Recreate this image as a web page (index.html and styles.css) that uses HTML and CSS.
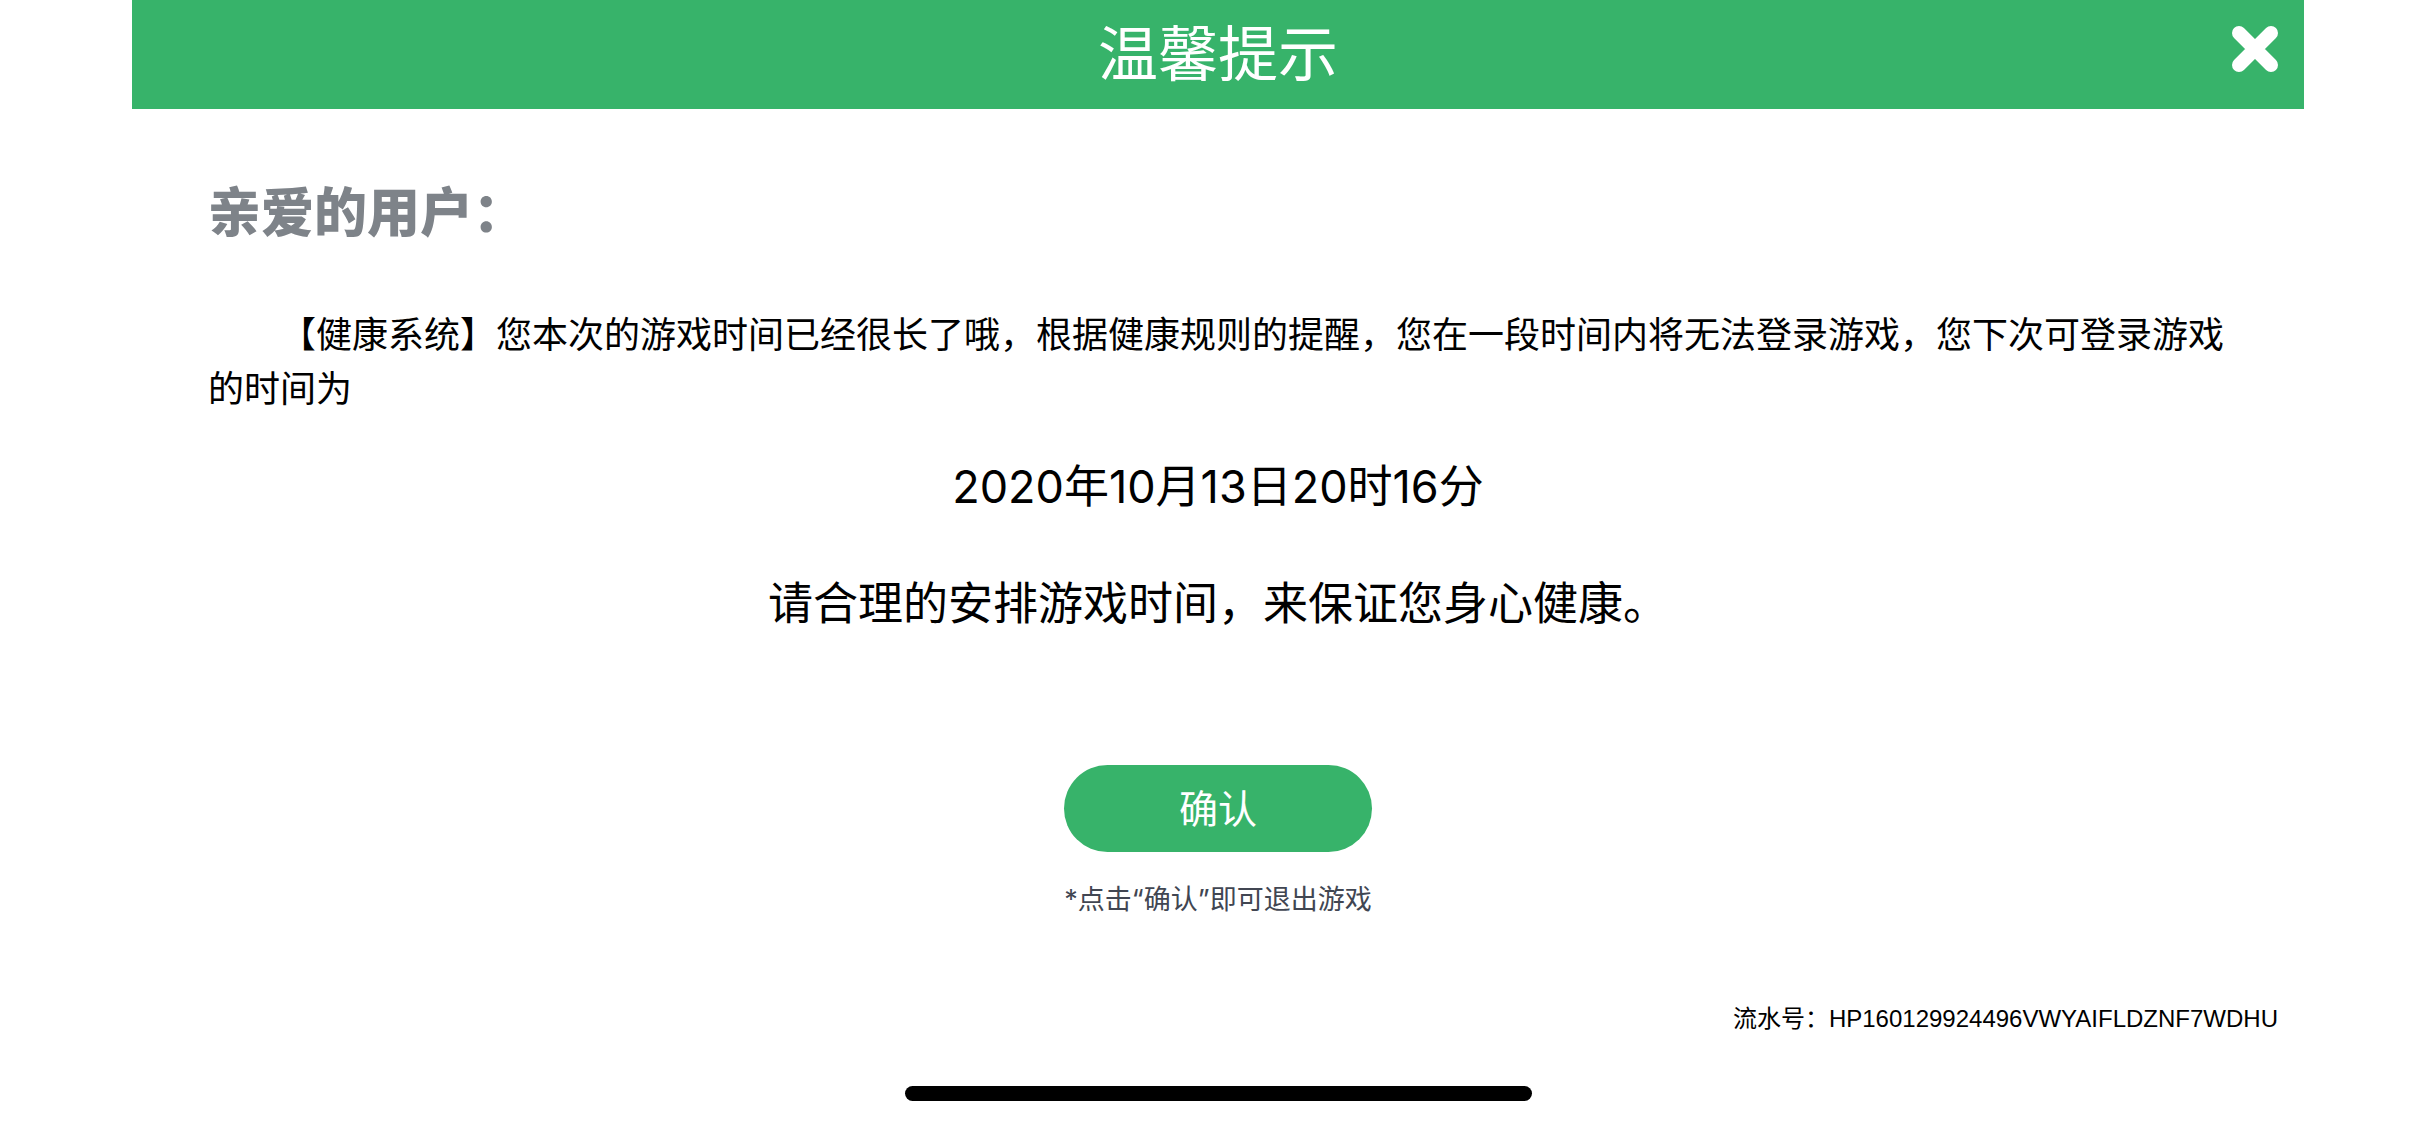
FILE: index.html
```html
<!DOCTYPE html>
<html lang="zh-CN">
<head>
    <meta charset="UTF-8">
    <meta name="viewport" content="width=device-width, initial-scale=1">
    <title>温馨提示</title>
    <link rel="stylesheet" href="styles.css">
</head>
<body>
    <div class="dialog">
        <header class="dialog-header">
            <h1>温馨提示</h1>
            <button type="button" class="close-btn" aria-label="关闭">
                <svg viewBox="0 0 46 46" width="46" height="46">
                    <path d="M7 7L39 39M39 7L7 39" stroke="#fff" stroke-width="14" stroke-linecap="round"/>
                </svg>
            </button>
        </header>
        <main class="dialog-body">
            <h2>亲爱的用户：</h2>
            <p class="message">【健康系统】您本次的游戏时间已经很长了哦，根据健康规则的提醒，您在一段时间内将无法登录游戏，您下次可登录游戏的时间为</p>
            <p class="notice">2020年10月13日20时16分</p>
            <p class="notice">请合理的安排游戏时间，来保证您身心健康。</p>
            <button type="button" class="confirm-btn">确认</button>
            <p class="hint">*点击“确认”即可退出游戏</p>
        </main>
        <footer class="serial">流水号：HP160129924496VWYAIFLDZNF7WDHU</footer>
    </div>
    <div class="home-bar"></div>
</body>
</html>
```

FILE: styles.css
```css
body {
    font-family: Inter, "Noto Sans CJK SC", sans-serif;
    font-weight: 400;
    margin: 0;
    color: #000;
    background: #fff;
}

h1, h2, p {
    margin: 0;
}

button {
    font-family: inherit;
    border: none;
    cursor: pointer;
}

.dialog {
    margin: 0 132px;
}

.dialog-header {
    display: grid;
    grid-template-columns: 1fr auto 1fr;
    align-items: start;
    padding: 0 26px;
    background: #37b36a;
}

.dialog-header h1 {
    grid-column: 2;
    font-size: 60px;
    font-weight: 400;
    line-height: 109px;
    color: #fff;
}

.close-btn {
    justify-self: end;
    margin-top: 26px;
    padding: 0;
    background: none;
}

.close-btn svg {
    display: block;
}

.dialog-body {
    display: flex;
    flex-direction: column;
    align-items: center;
    padding: 64px 76px 0;
}

.dialog-body h2 {
    align-self: flex-start;
    font-size: 53px;
    font-weight: 900;
    line-height: 80px;
    color: #7e8389;
}

.message {
    align-self: stretch;
    margin: 55px 0 36px;
    font-size: 36px;
    line-height: 54px;
    text-indent: 2em;
}

.notice {
    margin-bottom: 48px;
    font-size: 45px;
    line-height: 69px;
    text-align: center;
}

.confirm-btn {
    width: 308px;
    height: 87px;
    margin-top: 79px;
    padding: 0 0 6px;
    border-radius: 44px;
    font-size: 39px;
    color: #fff;
    background: #37b36a;
}

.hint {
    margin-top: 28px;
    font-size: 27px;
    line-height: 40px;
    color: #414652;
}

.serial {
    padding: 81px 26px 0;
    font-family: "Liberation Sans", "Noto Sans CJK SC", sans-serif;
    font-size: 24px;
    line-height: 36px;
    text-align: right;
}

.home-bar {
    width: 627px;
    height: 15px;
    margin: 49px auto 24px;
    border-radius: 8px;
    background: #000;
}
```
